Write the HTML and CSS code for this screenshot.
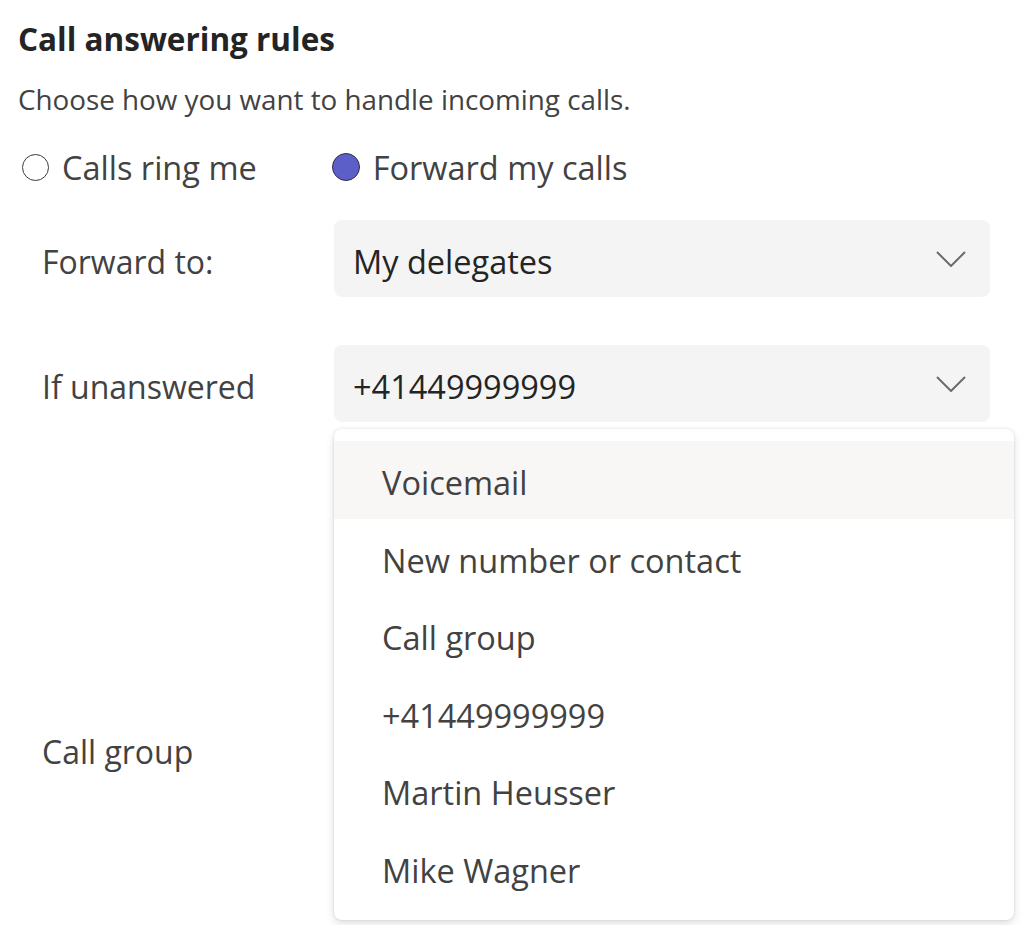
FILE: index.html
```html
<!DOCTYPE html>
<html lang="en">
<head>
<meta charset="utf-8">
<title>Call answering rules</title>
<link rel="stylesheet" href="styles.css">
</head>
<body>
<main class="page">
  <h1 class="title">Call answering rules</h1>
  <p class="subtitle">Choose how you want to handle incoming calls.</p>

  <div class="radios">
    <label class="radio">
      <span class="radio-dot"></span>
      <span class="radio-text">Calls ring me</span>
    </label>
    <label class="radio radio-checked">
      <span class="radio-dot"></span>
      <span class="radio-text">Forward my calls</span>
    </label>
  </div>

  <div class="row">
    <span class="row-label">Forward to:</span>
    <div class="select">
      <span class="select-value">My delegates</span>
      <svg class="chevron" viewBox="0 0 30 16" width="30" height="16"><path d="M1 1 L15 15 L29 1" fill="none" stroke="#6b6b6b" stroke-width="2"/></svg>
    </div>
  </div>

  <div class="row row-unanswered">
    <span class="row-label">If unanswered</span>
    <div class="select-wrap">
      <div class="select">
        <span class="select-value">+41449999999</span>
        <svg class="chevron" viewBox="0 0 30 16" width="30" height="16"><path d="M1 1 L15 15 L29 1" fill="none" stroke="#6b6b6b" stroke-width="2"/></svg>
      </div>
      <ul class="menu">
        <li class="menu-item menu-item-active">Voicemail</li>
        <li class="menu-item">New number or contact</li>
        <li class="menu-item">Call group</li>
        <li class="menu-item">+41449999999</li>
        <li class="menu-item">Martin Heusser</li>
        <li class="menu-item">Mike Wagner</li>
      </ul>
    </div>
  </div>

  <div class="row row-group">
    <span class="row-label">Call group</span>
    <div class="select">
      <span class="select-value"></span>
    </div>
  </div>
</main>
</body>
</html>
```

FILE: styles.css
```css
* { box-sizing: border-box; }
html, body { margin: 0; padding: 0; background: #ffffff; }
body {
  font-family: "Open Sans", "Noto Sans", sans-serif;
  color: #242424;
  width: 1024px;
  height: 925px;
  overflow: hidden;
}
.page {
  padding: 18px 0 0 18px;
}
.title {
  margin: 0;
  font-size: 31.5px;
  font-weight: 700;
  line-height: 42px;
  color: #242424;
}
.subtitle {
  margin: 20px 0 0 0;
  font-size: 27.8px;
  line-height: 38px;
  color: #424242;
}
.radios {
  display: flex;
  align-items: center;
  margin-top: 29px;
  padding-left: 4px;
  height: 40px;
}
.radio {
  display: flex;
  align-items: center;
  gap: 13px;
  font-size: 32.5px;
  color: #424242;
}
.radio + .radio { margin-left: 75px; }
.radio-dot {
  width: 27px;
  height: 27px;
  border-radius: 50%;
  border: 1.5px solid #3a3a3a;
  background: #fff;
  flex: none;
}
.radio-checked .radio-dot {
  background: #5b5fc7;
  border-color: #2f2f4a;
  width: 28px;
  height: 28px;
}
.row {
  display: flex;
  align-items: center;
  margin-top: 33px;
  padding-left: 24px;
}
.row-unanswered { margin-top: 48px; }
.row-group { margin-top: 288px; }
.row-label {
  width: 292px;
  flex: none;
  font-size: 32px;
  color: #424242;
  padding-top: 6px;
}
.select-wrap {
  position: relative;
}
.select {
  width: 656px;
  height: 77px;
  border-radius: 8px;
  background: #f4f4f4;
  display: flex;
  align-items: center;
  justify-content: space-between;
  padding: 0 24px 0 19px;
  font-size: 32.5px;
  color: #242424;
}
.select-value { padding-top: 6px; }
.chevron { display: block; }
.menu {
  position: absolute;
  left: 0;
  top: 84px;
  width: 680px;
  margin: 0;
  padding: 12px 0 14px 0;
  list-style: none;
  background: #ffffff;
  border-radius: 8px;
  box-shadow: 0 0 3px rgba(0,0,0,0.12), 0 4px 10px rgba(0,0,0,0.12);
  z-index: 2;
}
.menu-item {
  height: 77.5px;
  display: flex;
  align-items: center;
  padding: 6px 0 0 48px;
  font-size: 32.5px;
  color: #424242;
}
.menu-item-active {
  background: #f8f7f6;
}
```
